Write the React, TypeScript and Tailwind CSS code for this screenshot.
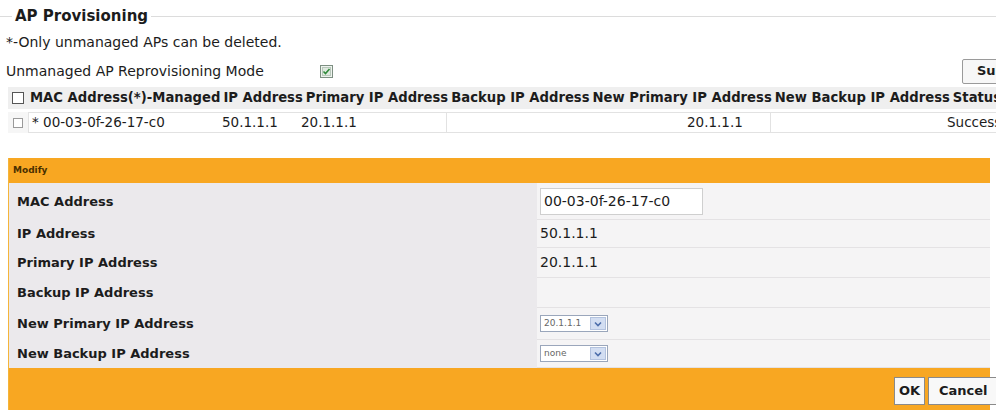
import React from 'react';

const headers = [
  'MAC Address(*)-Managed',
  'IP Address',
  'Primary IP Address',
  'Backup IP Address',
  'New Primary IP Address',
  'New Backup IP Address',
  'Status',
];

function Box({ light }: { light?: boolean }) {
  return (
    <span
      className={
        light
          ? 'block w-[10px] h-[10px] border border-[#9a9a9a] bg-white'
          : 'block w-[12px] h-[12px] border border-[#555] bg-white'
      }
    />
  );
}

function CheckedBox() {
  return (
    <svg className="shrink-0" width="13" height="13" viewBox="0 0 13 13">
      <rect x="0.5" y="0.5" width="12" height="12" fill="#eef3ee" stroke="#7d8f82" />
      <rect x="2.5" y="2.5" width="8" height="8" fill="#dfe9df" stroke="#b8c8bb" />
      <path d="M3.5 6.5 L5.5 8.5 L9.5 4" fill="none" stroke="#2f8a3a" strokeWidth="1.6" />
    </svg>
  );
}

function Select({ value }: { value: string }) {
  return (
    <div className="flex items-center w-[68px] h-[17px] border border-[#9aa6bb] bg-white">
      <span className="flex-1 pl-[3px] text-[9px] text-[#666] leading-none">{value}</span>
      <span className="flex items-center justify-center w-[16px] h-[13px] mr-[1px] bg-[#d3def2] border border-[#b3c2de]">
        <svg width="8" height="6" viewBox="0 0 8 6">
          <path d="M1 1.5 L4 4.5 L7 1.5" fill="none" stroke="#4d6eab" strokeWidth="1.6" />
        </svg>
      </span>
    </div>
  );
}

const rows: { label: string; h: string; value: React.ReactNode }[] = [
  {
    label: 'MAC Address',
    h: 'h-[37px]',
    value: (
      <div className="mt-[1px] w-[163px] h-[27px] border border-[#cfcfcf] bg-white pl-[3px] flex items-center text-[14px]">
        00-03-0f-26-17-c0
      </div>
    ),
  },
  { label: 'IP Address', h: 'h-[28px]', value: <span className="text-[14px]">50.1.1.1</span> },
  { label: 'Primary IP Address', h: 'h-[30px]', value: <span className="text-[14px]">20.1.1.1</span> },
  { label: 'Backup IP Address', h: 'h-[30px]', value: null },
  { label: 'New Primary IP Address', h: 'h-[32px]', value: <Select value="20.1.1.1" /> },
  { label: 'New Backup IP Address', h: 'h-[28px]', value: <Select value="none" /> },
];

export default function App() {
  return (
    <div className="w-[996px] h-[415px] overflow-hidden bg-white text-[#1c1c1c] font-['DejaVu_Sans',sans-serif]">
      {/* AP Provisioning */}
      <fieldset className="mt-[7px] w-[990px] border-t border-r border-[#dcdcdc]">
        <legend className="ml-[12px] px-[3px] text-[15px] font-bold leading-[18px]">AP Provisioning</legend>

        <div className="w-[1040px]">
          <p className="mt-[8px] pl-[6px] text-[14px] leading-[18px]">*-Only unmanaged APs can be deleted.</p>

          <div className="mt-[7px] flex items-center h-[26px]">
            <span className="shrink-0 pl-[6px] w-[320px] text-[14px] whitespace-nowrap">Unmanaged AP Reprovisioning Mode</span>
            <CheckedBox />
            <span className="shrink-0 w-[629px]" />
            <button className="shrink-0 h-[25px] px-[14px] border border-[#9a9a9a] rounded-[2px] bg-[#f7f7f7] text-[13px] font-bold">
              Submit
            </button>
          </div>

          {/* table header */}
          <div className="mt-[3px] ml-[8px] flex items-center gap-[3px] h-[22px] bg-[#efefef] text-[13.2px] font-bold whitespace-nowrap">
            <span className="w-[19px] pl-[4px]">
              <Box />
            </span>
            {headers.map((h) => (
              <span key={h}>{h}</span>
            ))}
          </div>

          {/* table row */}
          <div className="mt-[3px] ml-[8px] flex h-[21px] bg-[#f6f6f6] text-[13.5px] whitespace-nowrap">
            <span className="w-[20px] flex items-center pl-[5px]">
              <Box light />
            </span>
            <span className="w-[419px] bg-white border border-[#e2e2e2] flex items-center">
              <span className="w-[184px] pl-[3px]">* 00-03-0f-26-17-c0</span>
              <span className="w-[82px] pl-[9px]">50.1.1.1</span>
              <span className="pl-[6px]">20.1.1.1</span>
            </span>
            <span className="w-[323px] bg-white border-y border-[#e2e2e2] pl-[240px] flex items-center">20.1.1.1</span>
            <span className="w-[238px] bg-white border border-[#e2e2e2] pl-[176px] flex items-center">Success</span>
          </div>

          {/* Modify panel */}
          <div className="mt-[25px] ml-[8px] w-[982px] border-l border-[#f5b53a]">
            <div className="h-[25px] bg-[#f8a722] flex items-center pl-[4px] text-[9px] font-bold text-[#4a3000]">
              Modify
            </div>
            {rows.map((r) => (
              <div key={r.label} className={`flex ${r.h}`}>
                <div className="w-[528px] bg-[#ebe9ec] flex items-center pl-[8px] text-[13px] font-bold">
                  {r.label}
                </div>
                <div className="flex-1 bg-[#f5f4f5] border-b border-[#e4e2e4] flex items-center pl-[3px]">
                  {r.value}
                </div>
              </div>
            ))}
            <div className="h-[42px] bg-[#f8a722] flex items-center justify-end">
              <div className="flex gap-[3px] -mr-[8px] mt-[3px]">
                <button className="h-[28px] px-[4px] border border-[#8a8a8a] bg-[#f8f8f8] text-[13px] font-bold">OK</button>
                <button className="h-[28px] w-[70px] pl-[10px] text-left border border-[#8a8a8a] bg-[#f8f8f8] text-[13px] font-bold">
                  Cancel
                </button>
              </div>
            </div>
          </div>
        </div>
      </fieldset>
    </div>
  );
}
